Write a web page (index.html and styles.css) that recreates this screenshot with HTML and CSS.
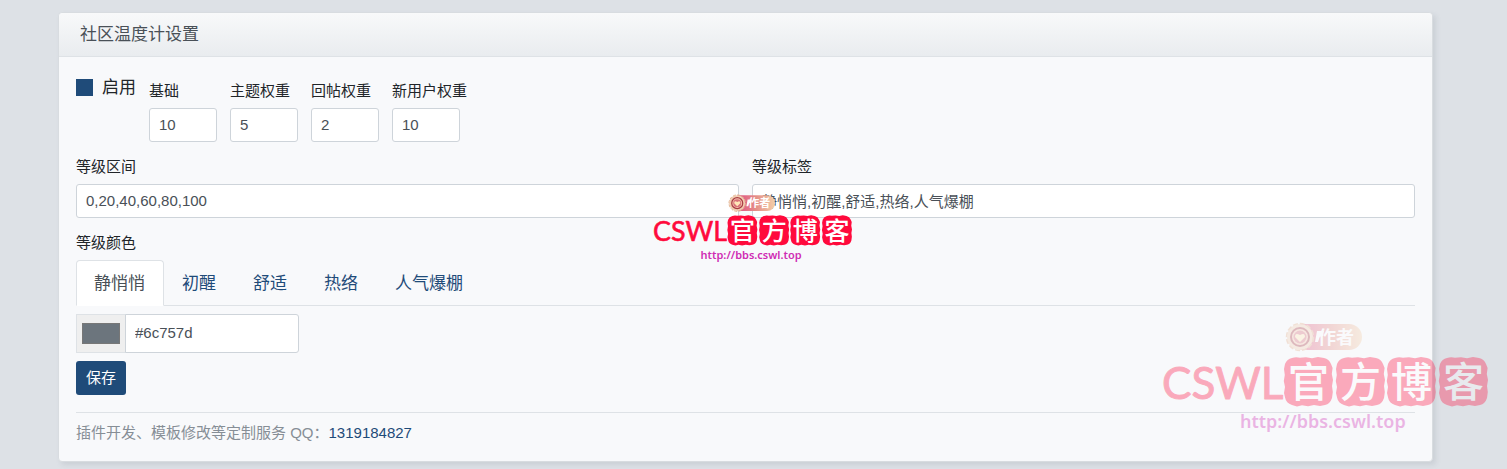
FILE: index.html
```html
<!DOCTYPE html>
<html lang="zh-CN">
<head>
<meta charset="utf-8">
<meta name="viewport" content="width=device-width, initial-scale=1">
<title>社区温度计设置</title>
<link rel="stylesheet" href="styles.css">
</head>
<body>
<main class="page">
  <form class="card">
    <h1 class="card-header">社区温度计设置</h1>
    <div class="card-body">
      <div class="weights">
        <label class="switch"><input class="check" type="checkbox" checked>启用</label>
        <div class="field small"><label for="base">基础</label><input class="control" id="base" type="text" value="10"></div>
        <div class="field small"><label for="thread">主题权重</label><input class="control" id="thread" type="text" value="5"></div>
        <div class="field small"><label for="reply">回帖权重</label><input class="control" id="reply" type="text" value="2"></div>
        <div class="field small"><label for="newuser">新用户权重</label><input class="control" id="newuser" type="text" value="10"></div>
      </div>
      <div class="levels">
        <div class="field"><label for="ranges">等级区间</label><input class="control" id="ranges" type="text" value="0,20,40,60,80,100"></div>
        <div class="field"><label for="labels">等级标签</label><input class="control" id="labels" type="text" value="静悄悄,初醒,舒适,热络,人气爆棚"></div>
      </div>
      <div class="field">
        <label for="hex">等级颜色</label>
        <nav class="tabs">
          <a class="tab active" href="#l1">静悄悄</a>
          <a class="tab" href="#l2">初醒</a>
          <a class="tab" href="#l3">舒适</a>
          <a class="tab" href="#l4">热络</a>
          <a class="tab" href="#l5">人气爆棚</a>
        </nav>
      </div>
      <div class="color-group">
        <input class="picker" type="color" value="#6c757d" aria-label="颜色">
        <input class="control hex" id="hex" type="text" value="#6c757d">
      </div>
      <button class="save" type="button">保存</button>
      <p class="note">插件开发、模板修改等定制服务 QQ：<a href="#qq">1319184827</a></p>
    </div>
  </form>

  <svg class="mark mark-center" viewBox="0 0 326 110">
    <defs>
      <linearGradient id="pill" x1="0" x2="1" y1="0" y2="0">
        <stop offset="0" stop-color="#df4f83"/><stop offset=".5" stop-color="#e58f88"/><stop offset="1" stop-color="#f3cfa8"/>
      </linearGradient>
      <path id="tile" d="M8 1Q12 -0.5 16 0.8L22 0.2L28 1.2L34 0L40 1Q45 2 47 7L48.6 11L47.8 17L49 23L48 29L48.8 35L48 41Q46 47 41 48L36 49L30 48L24 49.2L18 48.2L13 49.4L8 48Q2 46 1.2 41L0 36L1 30L-0.2 24L0.8 18L0 12L1 7Q3 2 8 1Z"/>
      <g id="medal">
        <path fill="url(#pill)" d="M138 2H187A13 13 0 0 1 187 28H138Z"/>
        <path fill="#fff" d="M155 9h7l-1 5h-3l-2 6h-3z"/>
        <circle cx="138" cy="15" r="13" fill="#f0cdb0"/>
        <circle cx="138" cy="15" r="13.5" fill="none" stroke="#e3b08c" stroke-width="1.5" stroke-dasharray="5 2"/>
        <circle cx="138" cy="15" r="9" fill="#f5c6ae" stroke="#a93b44" stroke-width="2"/>
        <circle cx="138" cy="15" r="6.5" fill="#d9717a"/>
        <path fill="#ffe8b8" d="M138 20l-5-5q0-5 5-2q5-3 5 2z"/>
      </g>
    </defs>
    <use href="#medal"/>
    <text class="mark-author" x="156" y="22">作者</text>
    <text class="mark-name" x="0" y="77">CSWL</text>
    <g fill="#ff0a3c"><use href="#tile" x="122" y="35"/><use href="#tile" x="174" y="35"/><use href="#tile" x="225" y="35"/><use href="#tile" x="277" y="35"/></g>
    <text class="mark-seal" y="75"><tspan x="126">官</tspan><tspan x="178">方</tspan><tspan x="229">博</tspan><tspan x="281">客</tspan></text>
    <text class="mark-url" x="78" y="106">http://bbs.cswl.top</text>
  </svg>

  <svg class="mark mark-corner" viewBox="0 0 326 110">
    <use href="#medal"/>
    <text class="mark-author" x="156" y="22">作者</text>
    <text class="mark-name" x="0" y="77">CSWL</text>
    <g fill="#ff0a3c"><use href="#tile" x="122" y="35"/><use href="#tile" x="174" y="35"/><use href="#tile" x="225" y="35"/><use href="#tile" x="277" y="35"/></g>
    <text class="mark-seal" y="75"><tspan x="126">官</tspan><tspan x="178">方</tspan><tspan x="229">博</tspan><tspan x="281">客</tspan></text>
    <text class="mark-url" x="78" y="106">http://bbs.cswl.top</text>
  </svg>
</main>
</body>
</html>
```
FILE: styles.css
```css
* { box-sizing: border-box; }

body {
  margin: 0;
  background: #dde1e6;
  color: #212529;
  font: 15px/23px "Liberation Sans", "Noto Sans CJK SC", sans-serif;
}

input, button { font: inherit; }
a { color: #1f4b79; text-decoration: none; }

.page { position: relative; padding: 12px 74px 7px 58px; }

.card {
  border: 1px solid #d8dce0;
  border-radius: 4px;
  background: #f8f9fb;
  box-shadow: 3px 3px 5px rgba(120, 135, 145, .18);
}

.card-header {
  margin: 0;
  padding: 8px 21px;
  border-bottom: 1px solid #dee2e6;
  border-radius: 4px 4px 0 0;
  background: linear-gradient(#f8f9fa, #e9ecef);
  color: #495057;
  font-size: 17px;
  font-weight: 400;
  line-height: 27px;
}

.card-body {
  display: flex;
  flex-direction: column;
  gap: 13px;
  padding: 22px 17px 17px;
}

.weights { display: flex; gap: 13px; }
.levels { display: grid; grid-template-columns: 1fr 1fr; gap: 13px; }

.switch {
  display: flex;
  gap: 9px;
  align-items: flex-start;
  align-self: flex-start;
  font-size: 17px;
  line-height: 18px;
}

.check {
  width: 17px;
  height: 17px;
  margin: 0;
  appearance: none;
  background: #1f4b79;
}

.field { display: flex; flex-direction: column; gap: 6px; }
.small { width: 68px; white-space: nowrap; }

.control {
  width: 100%;
  height: 34px;
  padding: 0 9px 2px;
  border: 1px solid #ced4da;
  border-radius: 3px;
  background: #fff;
  color: #495057;
}

.tabs { display: flex; border-bottom: 1px solid #dee2e6; }

.tab {
  margin-bottom: -1px;
  padding: 10px 18px 8px 17px;
  border: 1px solid transparent;
  border-radius: 4px 4px 0 0;
  font-size: 17px;
  line-height: 26px;
}

.tab.active {
  border-color: #dee2e6 #dee2e6 #fff;
  background: #fff;
  color: #495057;
}

.color-group { display: flex; margin-top: -5px; }

.picker {
  width: 50px;
  height: 39px;
  padding: 8px 5px;
  border: 1px solid #dee2e6;
  background: #efefef;
}

.picker::-webkit-color-swatch-wrapper { padding: 0; }
.picker::-webkit-color-swatch { border: 1px solid #777; }

.hex {
  width: 174px;
  height: 39px;
  margin-left: -1px;
  border-radius: 0 3px 3px 0;
}

.save {
  align-self: flex-start;
  height: 34px;
  margin-top: -5px;
  padding: 0 10px 2px;
  border: 0;
  border-radius: 3px;
  background: #1f4b79;
  color: #fff;
}

.note {
  margin: 4px 0 0;
  padding-top: 8px;
  border-top: 1px solid #dee2e6;
  color: #868e96;
}

.mark { position: absolute; overflow: visible; pointer-events: none; }
.mark-center { top: 194px; left: 50%; width: 199px; margin-left: -101px; }
.mark-corner { right: 19px; bottom: 37px; width: 326px; opacity: .33; }

.mark-author { fill: #fff; font: 700 18px "Noto Sans CJK SC", sans-serif; }
.mark-name { fill: #ff0a3c; stroke: #ff0a3c; stroke-linejoin: round; font: 44px Lato, sans-serif; }
.mark-seal { fill: #fff; font: 500 41px "Noto Sans CJK SC", sans-serif; }
.mark-url { fill: #cf2cb4; font: 600 18px "Noto Sans", sans-serif; }
```
